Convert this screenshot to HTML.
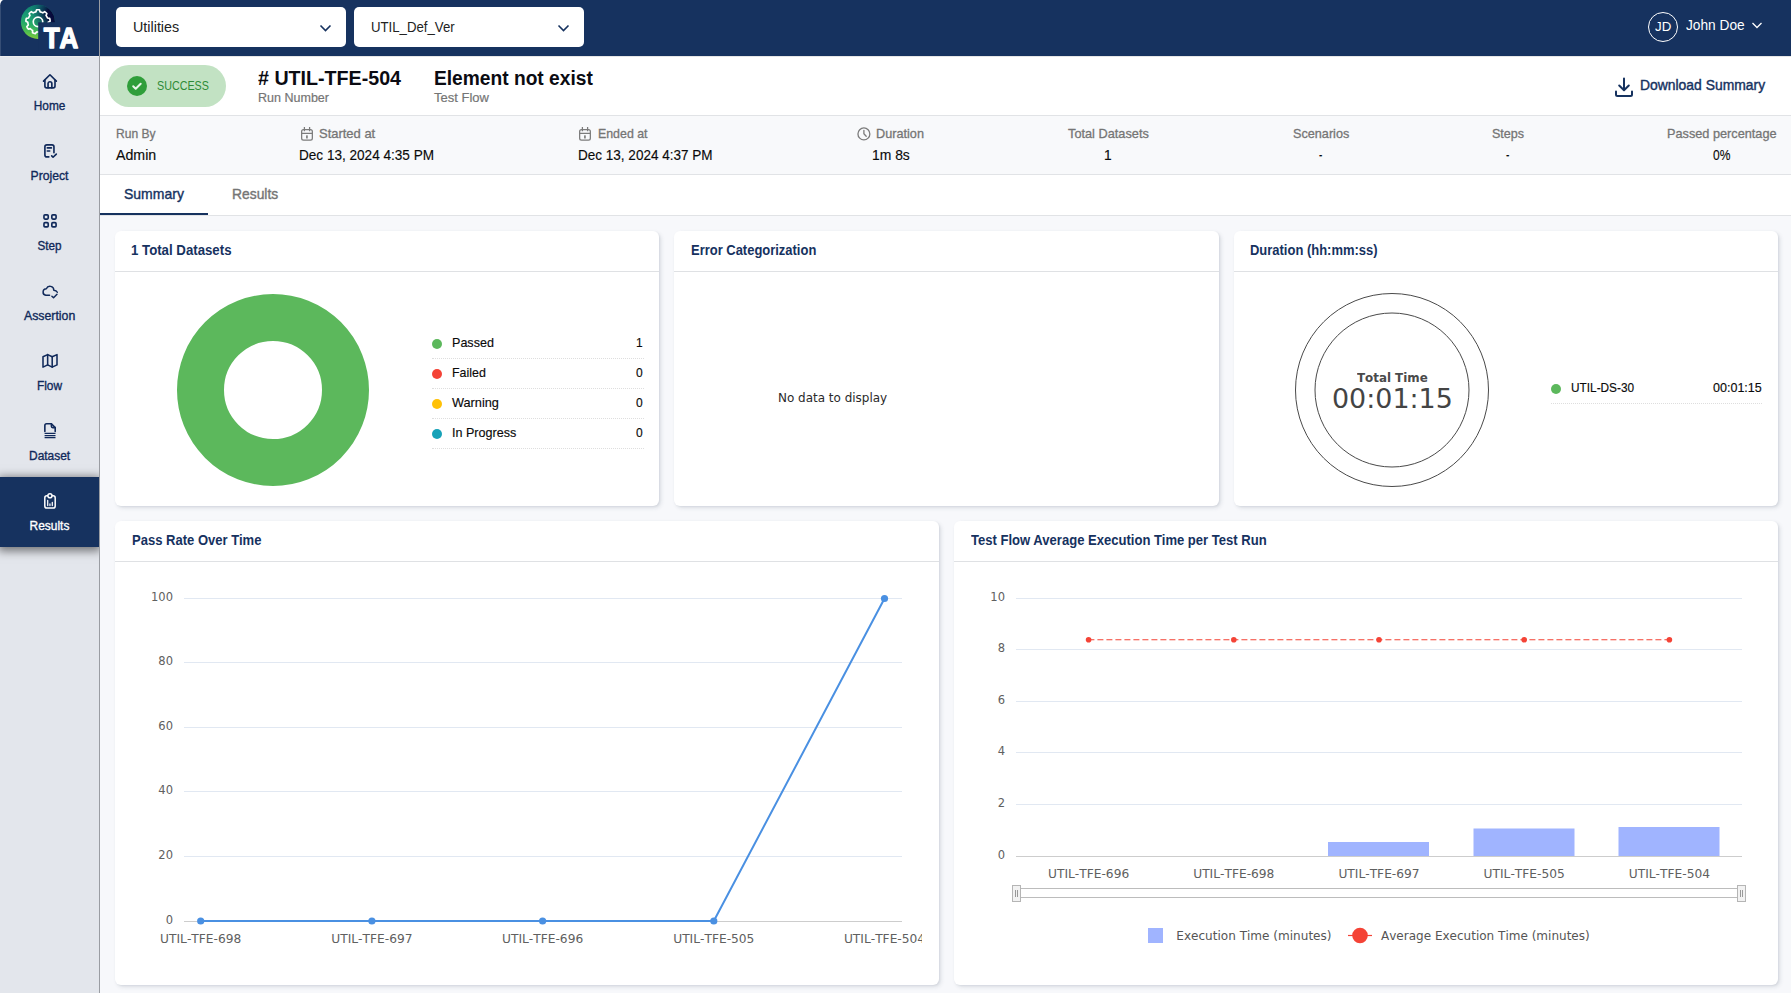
<!DOCTYPE html>
<html lang="en">
<head>
<meta charset="utf-8">
<title>Test Run Summary</title>
<style>
*{box-sizing:border-box;margin:0;padding:0}
html,body{width:1791px;height:993px;overflow:hidden}
body{font-family:"Liberation Sans",sans-serif;background:#f7f8fb;color:#000;position:relative}
.abs{position:absolute}
.t{position:absolute;white-space:nowrap;line-height:1;transform-origin:0 0}
/* top bar */
#topbar{left:0;top:0;width:1791px;height:56px;background:#16325f}
#corner{left:0;top:0;width:4px;height:7px;background:#fff;overflow:hidden}
#corner i{display:block;width:8px;height:14px;border-radius:3.500px 0 0 0 / 6.500px 0 0 0;background:#16325f}
#edge{left:0;top:6px;width:1px;height:50px;background:rgba(255,255,255,.14)}
#sidetop{left:0;top:56px;width:99px;height:1px;background:#ededee}
.sel{top:7px;height:40px;width:230px;background:#fff;border-radius:5px}
/* sidebar */
#side{left:0;top:56px;width:99px;height:937px;background:#e3e6ec;overflow:hidden}
#sideline{left:99px;top:0;width:1px;height:993px;background:#9a9da3}
.nav{left:0;width:99px;height:70px}
.nav .lbl{position:absolute;left:0;width:99px;text-align:center;top:43px;font-size:12.500px;color:#10295a;line-height:14px;-webkit-text-stroke:.35px currentColor;transform-origin:50% 0;white-space:nowrap}
.nav .lbl span{display:inline-block}
#navact{left:0;top:421px;width:99px;height:70px;background:#16325f;box-shadow:0 2px 9px 2px rgba(0,0,0,.5)}
/* run header */
#runhdr{left:100px;top:56px;width:1691px;height:59px;background:#fff;border-top:1px solid #e6e6e6}
#pill{left:108px;top:65px;width:118px;height:42px;border-radius:21px;background:#c2e2c3}
#info{left:100px;top:115px;width:1691px;height:60px;background:#f8f9fb;border-top:1px solid #e1e3e6;border-bottom:1px solid #e1e3e6}
#tabs{left:100px;top:175px;width:1691px;height:41px;background:#fff;border-bottom:1px solid #e1e3e6}
#tabline{left:100px;top:213px;width:108px;height:2px;background:#16325f}
.lab{font-size:13px;color:#757575;-webkit-text-stroke:.3px #757575}
.val{font-size:15px;color:#0a0a0a;-webkit-text-stroke:.150px #0a0a0a}
/* cards */
.card{background:#fff;border-radius:6px;box-shadow:2px 2px 4px rgba(55,70,90,.13),1px 1px 2px rgba(55,70,90,.08)}
.chead{position:absolute;left:0;top:0;right:0;height:41px;border-bottom:1px solid #dfe1e4}
.ctitle{font-size:14px;font-weight:bold;color:#16325f;left:16px;top:13px}
.dv{font-family:"DejaVu Sans",sans-serif;font-kerning:none}
.dot{width:10px;height:10px;border-radius:50%}
.lg{font-size:13px;color:#0a0a0a;-webkit-text-stroke:.150px #0a0a0a}
.lgrow{left:432px;width:211.500px;height:30px;border-bottom:1px dotted #dedede}
.m{-webkit-text-stroke:.3px currentColor}
/*FIT*/
#t_util{left:133.0px!important;transform:scaleX(0.9557)}
#t_udv{left:370.9px!important;transform:scaleX(0.8806)}
#t_jd{left:1654.5px!important;transform:scaleX(1.0258)}
#t_john{left:1686.3px!important;transform:scaleX(0.9141)}
#t_succ{left:157.1px!important;transform:scaleX(0.8257)}
#t_run{left:258.3px!important;transform:scaleX(0.9823)}
#t_runl{left:258.3px!important;transform:scaleX(0.9633)}
#t_ene{left:434.2px!important;transform:scaleX(0.9589)}
#t_tfl{left:434.2px!important;transform:scaleX(0.9999)}
#t_dl{left:1639.8px!important;transform:scaleX(0.9924)}
#t_runby{left:116.2px!important;transform:scaleX(0.9287)}
#t_admin{left:116.2px!important;transform:scaleX(0.9452)}
#t_sta{left:319.3px!important;transform:scaleX(0.9969)}
#t_std{left:299.2px!important;transform:scaleX(0.9044)}
#t_ena{left:597.9px!important;transform:scaleX(0.9511)}
#t_end{left:577.8px!important;transform:scaleX(0.9017)}
#t_dur{left:876.2px!important;transform:scaleX(0.9768)}
#t_durv{left:871.6px!important;transform:scaleX(0.9251)}
#t_tds{left:1068.2px!important;transform:scaleX(0.9809)}
#t_tdsv{left:1104.1px!important;transform:scaleX(0.9200)}
#t_scn{left:1292.5px!important;transform:scaleX(0.9738)}
#t_scnv{left:1319.0px!important;transform:scaleX(0.6600)}
#t_stp{left:1492.2px!important;transform:scaleX(0.9654)}
#t_stpv{left:1506.2px!important;transform:scaleX(0.6800)}
#t_pp{left:1667.4px!important;transform:scaleX(0.9783)}
#t_ppv{left:1713.3px!important;transform:scaleX(0.8023)}
#t_sum{left:124.0px!important;transform:scaleX(0.9332)}
#t_res{left:232.2px!important;transform:scaleX(0.9234)}
#t_c1{left:131.2px!important;transform:scaleX(0.9450)}
#t_c2{left:690.5px!important;transform:scaleX(0.9257)}
#t_c3{left:1250.0px!important;transform:scaleX(0.9261)}
#t_c4{left:131.6px!important;transform:scaleX(0.9306)}
#t_c5{left:970.6px!important;transform:scaleX(0.9323)}
#t_pas{left:452.1px!important;transform:scaleX(0.9660)}
#t_fai{left:452.1px!important;transform:scaleX(0.9542)}
#t_war{left:452.1px!important;transform:scaleX(0.9784)}
#t_inp{left:452.1px!important;transform:scaleX(0.9671)}
#t_v1{left:636.2px!important;transform:scaleX(0.9200)}
#t_v2{left:636.3px!important;transform:scaleX(0.9261)}
#t_v3{left:636.3px!important;transform:scaleX(0.9261)}
#t_v4{left:636.3px!important;transform:scaleX(0.9261)}
#t_nodata{left:778.3px!important;transform:scaleX(0.9578)}
#t_tt{left:1356.8px!important;transform:scaleX(0.9888)}
#t_tv{left:1331.6px!important;transform:scaleX(0.9962)}
#t_ds{left:1571.0px!important;transform:scaleX(0.9098)}
#t_dsv{left:1713.2px!important;transform:scaleX(0.9642)}
#t_home{transform:translateX(0.10px) scaleX(0.9477)}
#t_proj{transform:translateX(0.00px) scaleX(0.9767)}
#t_step{transform:translateX(0.00px) scaleX(0.9332)}
#t_assert{transform:translateX(0.15px) scaleX(0.9845)}
#t_flow{transform:translateX(-0.05px) scaleX(0.9505)}
#t_dataset{transform:translateX(0.10px) scaleX(0.9561)}
#t_results{transform:translateX(0.00px) scaleX(0.9547)}
/*ENDFIT*/
</style>
</head>
<body>
<!-- TOP BAR -->
<div id="topbar" class="abs"></div>
<div id="corner" class="abs"><i></i></div><div id="edge" class="abs"></div>
<!-- logo -->
<svg class="abs" style="left:18px;top:2px;width:66px;height:52px" viewBox="0 0 66 52">
  <defs>
    <linearGradient id="lg" x1="0.55" y1="0" x2="0.4" y2="1">
      <stop offset="0" stop-color="#107a70"/>
      <stop offset="0.35" stop-color="#1a9c74"/>
      <stop offset="0.6" stop-color="#27ab68"/>
      <stop offset="0.82" stop-color="#4dbd50"/>
      <stop offset="1" stop-color="#80ca3c"/>
    </linearGradient>
    <radialGradient id="rg" cx="1.0" cy="0.27" r="0.72">
      <stop offset="0" stop-color="#07073a" stop-opacity="1"/>
      <stop offset="0.32" stop-color="#07073a" stop-opacity=".95"/>
      <stop offset="0.62" stop-color="#0a2a55" stop-opacity=".6"/>
      <stop offset="1" stop-color="#0f6a6a" stop-opacity="0"/>
    </radialGradient>
  </defs>
  <circle cx="19.900" cy="19.850" r="17.050" fill="url(#lg)"/><circle cx="19.900" cy="19.850" r="17.050" fill="url(#rg)"/>
  <g fill="none" stroke="#fff" stroke-width="1.650" stroke-linejoin="round">
    <path d="M17.88 9.87L18.56 7.79A12.15 12.15 0 0 1 21.44 7.79L22.12 9.87A10.2 10.2 0 0 1 24.79 10.84L26.65 9.68A12.15 12.15 0 0 1 28.86 11.53L28.04 13.57A10.2 10.2 0 0 1 29.46 16.03L31.63 16.34A12.15 12.15 0 0 1 32.13 19.17L30.19 20.21A10.2 10.2 0 0 1 29.70 23.00L31.17 24.64A12.15 12.15 0 0 1 29.73 27.13L27.58 26.68A10.2 10.2 0 0 1 25.41 28.50L25.48 30.69A12.15 12.15 0 0 1 22.77 31.68L21.42 29.95A10.2 10.2 0 0 1 18.58 29.95L17.23 31.68A12.15 12.15 0 0 1 14.52 30.69L14.59 28.50A10.2 10.2 0 0 1 12.42 26.68L10.27 27.13A12.15 12.15 0 0 1 8.83 24.64L10.30 23.00A10.2 10.2 0 0 1 9.81 20.21L7.87 19.17A12.15 12.15 0 0 1 8.37 16.34L10.54 16.03A10.2 10.2 0 0 1 11.96 13.57L11.14 11.53A12.15 12.15 0 0 1 13.35 9.68L15.21 10.84A10.2 10.2 0 0 1 17.88 9.87Z"/>
    <circle cx="20" cy="19.850" r="4.750"/>
  </g>
  <rect x="20.200" y="20.300" width="46" height="32" fill="#16325f"/>
  <text transform="translate(25.700,45.700) scale(0.880,1)" style="font-kerning:none" font-family="'Liberation Sans',sans-serif" font-weight="bold" font-size="29.500" fill="#fff" stroke="#fff" stroke-width="1.500" stroke-linejoin="round">TA</text>
</svg>
<!-- selects -->
<div class="abs sel" style="left:116px"></div>
<div class="abs sel" style="left:354px"></div>
<div class="t" id="t_util" style="left:133px;top:19px;font-size:15px;color:#222">Utilities</div>
<div class="t" id="t_udv" style="left:371px;top:19px;font-size:15px;color:#222">UTIL_Def_Ver</div>
<svg class="abs" style="left:319.300px;top:22.800px;width:13px;height:10px" viewBox="0 0 13 10"><path d="M1.5 2.5l5 5 5-5" fill="none" stroke="#16325f" stroke-width="1.6"/></svg>
<svg class="abs" style="left:557.300px;top:22.800px;width:13px;height:10px" viewBox="0 0 13 10"><path d="M1.5 2.5l5 5 5-5" fill="none" stroke="#16325f" stroke-width="1.6"/></svg>
<!-- user -->
<div class="abs" style="left:1647.800px;top:11.600px;width:30.400px;height:30.400px;border:1.400px solid #fff;border-radius:50%"></div>
<div class="t" id="t_jd" style="left:1654px;top:20px;font-size:13px;color:#fff">JD</div>
<div class="t" id="t_john" style="left:1686px;top:17px;font-size:15px;color:#fff">John Doe</div>
<svg class="abs" style="left:1751px;top:21px;width:12px;height:9px" viewBox="0 0 12 9"><path d="M1.5 2l4.5 4.5L10.500 2" fill="none" stroke="#fff" stroke-width="1.3"/></svg>
<div id="sideline" class="abs"></div>
<!-- SIDEBAR -->
<div id="side" class="abs"><div id="navact" class="abs"></div></div><div id="sidetop" class="abs"></div>
<svg class="abs" style="left:38px;top:68px;width:24px;height:24px" viewBox="38 68 24 24" fill="none" stroke="#10295a" stroke-width="1.65" stroke-linejoin="round" stroke-linecap="round"><path d="M43.550 81.100L49.950 74.750l6.400 6.350"/><path d="M44.900 80.300v5.700a1.800 1.800 0 0 0 1.800 1.800h6.500a1.800 1.800 0 0 0 1.800-1.800v-5.700"/><path d="M48.050 87.800v-4.200a1.900 1.900 0 0 1 3.800 0v4.200"/></svg>
<div class="abs nav" style="top:56px"><div class="lbl" id="t_home">Home</div></div>
<svg class="abs" style="left:38px;top:138px;width:24px;height:24px" viewBox="38 138 24 24" fill="none" stroke="#10295a" stroke-width="1.65" stroke-linejoin="round" stroke-linecap="round"><path d="M53.950 152.700v-5.850a2 2 0 0 0-2-2h-5.050a2 2 0 0 0-2 2v8.050a2 2 0 0 0 2 2h1.900"/><path d="M47.300 147.930h4.100M47.300 150.950h2.400"/><path d="M51.700 155.900l1.350 1.350 3.250-3.100"/></svg>
<div class="abs nav" style="top:126px"><div class="lbl" id="t_proj">Project</div></div>
<svg class="abs" style="left:38px;top:208px;width:24px;height:24px" viewBox="38 208 24 24" fill="none" stroke="#10295a" stroke-width="1.65" stroke-linejoin="round" stroke-linecap="round"><rect x="43.970" y="214.830" width="4.240" height="4.240" rx="1"/><rect x="51.830" y="214.830" width="4.240" height="4.240" rx="1"/><rect x="43.970" y="222.680" width="4.240" height="4.240" rx="1"/><rect x="51.830" y="222.680" width="4.240" height="4.240" rx="1"/></svg>
<div class="abs nav" style="top:196px"><div class="lbl" id="t_step">Step</div></div>
<svg class="abs" style="left:38px;top:278px;width:24px;height:24px" viewBox="38 278 24 24" fill="none" stroke="#10295a" stroke-width="1.45" stroke-linejoin="round" stroke-linecap="round"><path d="M49.600 295.300H45.800a3.300 3.300 0 0 1 .57-6.550A3.850 3.850 0 0 1 53.800 290.200c1.700 0 3 .9 3.500 2.100"/><path d="M51.900 296.200l1.650 1.650 3.450-3.550"/></svg>
<div class="abs nav" style="top:266px"><div class="lbl" id="t_assert">Assertion</div></div>
<svg class="abs" style="left:38px;top:348px;width:24px;height:24px" viewBox="38 348 24 24" fill="none" stroke="#10295a" stroke-width="1.55" stroke-linejoin="round" stroke-linecap="round"><path d="M43 356.700L47.650 354.600 52.200 356.700 57 354.600V364.900L52.200 367.100 47.650 364.900 43 367.100Z"/><path d="M47.650 354.600V364.900M52.200 356.700V367.100"/></svg>
<div class="abs nav" style="top:336px"><div class="lbl" id="t_flow">Flow</div></div>
<svg class="abs" style="left:38px;top:418px;width:24px;height:24px" viewBox="38 418 24 24" fill="none" stroke="#10295a" stroke-width="1.6" stroke-linejoin="round" stroke-linecap="round"><path d="M44.850 431.400V425.500a1.700 1.700 0 0 1 1.700-1.700H51.400L55.200 427.600V431.400"/><path d="M51.400 423.900V426.300a1.300 1.300 0 0 0 1.300 1.300H55.200" /><path d="M44.600 433.400H55.500M44.600 435.550H55.500M44.600 437.650H55.500" stroke-width="1.300" stroke-linecap="butt"/></svg>
<div class="abs nav" style="top:406px"><div class="lbl" id="t_dataset">Dataset</div></div>
<svg class="abs" style="left:38px;top:488px;width:24px;height:24px" viewBox="38 488 24 24" fill="none" stroke="#fff" stroke-width="1.5" stroke-linejoin="round" stroke-linecap="round"><rect x="44.800" y="495.800" width="10.400" height="12.250" rx="2.100"/><circle cx="49.950" cy="495.700" r="2.050" fill="#16325f"/><path d="M47.700 505.500v-5.100M49.950 505.500v-1.600M52.300 505.500v-3.100" stroke-width="1.250"/></svg>
<div class="abs nav" style="top:476px"><div class="lbl" id="t_results" style="color:#fff">Results</div></div>
<!-- RUN HEADER -->
<div id="runhdr" class="abs"></div>
<div id="info" class="abs"></div>
<div id="tabs" class="abs"></div>
<div id="tabline" class="abs"></div>
<div id="pill" class="abs"></div>
<svg class="abs" style="left:127px;top:76px;width:20px;height:20px" viewBox="0 0 20 20"><circle cx="10" cy="10" r="10" fill="#2f9e3a"/><path d="M6.200 10.200l2.500 2.500 5-5" fill="none" stroke="#eaf6ea" stroke-width="2" stroke-linecap="round" stroke-linejoin="round"/></svg>
<div class="t" id="t_succ" style="left:157px;top:79px;font-size:13px;color:#2e8b36">SUCCESS</div>
<div class="t" id="t_run" style="left:258px;top:68px;font-size:20px;font-weight:bold;color:#0b0b12">#&nbsp;UTIL-TFE-504</div>
<div class="t" id="t_runl" style="left:258px;top:91px;font-size:13px;color:#757575;-webkit-text-stroke:.2px #757575">Run Number</div>
<div class="t" id="t_ene" style="left:434px;top:68px;font-size:20px;font-weight:bold;color:#0b0b12">Element not exist</div>
<div class="t" id="t_tfl" style="left:434px;top:91px;font-size:13px;color:#757575;-webkit-text-stroke:.2px #757575">Test Flow</div>
<svg class="abs" style="left:1614px;top:75.500px;width:20px;height:22px" viewBox="0 0 20 22"><g fill="none" stroke="#16325f" stroke-width="2" stroke-linecap="round" stroke-linejoin="round"><path d="M10 2.500v11.500M5.200 9.500l4.800 4.700 4.800-4.700"/><path d="M2 15.500v3a1.500 1.500 0 0 0 1.500 1.500h13a1.500 1.500 0 0 0 1.500-1.500v-3"/></g></svg>
<div class="t" id="t_dl" style="left:1639px;top:78px;font-size:14px;color:#16325f;-webkit-text-stroke:.4px #16325f">Download Summary</div>
<!-- info row -->
<div class="t lab" id="t_runby" style="left:116px;top:127px">Run By</div>
<div class="t val" id="t_admin" style="left:116px;top:147px">Admin</div>
<svg class="abs" style="left:299px;top:125px;width:16px;height:18px" viewBox="299 125 16 18"><g fill="none" stroke="#7b7b7b" stroke-width="1.250" stroke-linejoin="round"><rect x="301.650" y="129.500" width="10.700" height="10.700" rx="1.900"/><path d="M301.650 133.300H312.350M304.400 127.100V131.200M309.600 127.100V131.200"/><rect x="306.100" y="135.300" width="1.650" height="3.100" rx=".500" fill="#7b7b7b" stroke="none"/></g></svg>
<div class="t lab" id="t_sta" style="left:319px;top:127px">Started at</div>
<div class="t val" id="t_std" style="left:299px;top:147px">Dec 13, 2024 4:35 PM</div>
<svg class="abs" style="left:577px;top:125px;width:16px;height:18px" viewBox="299 125 16 18"><g fill="none" stroke="#7b7b7b" stroke-width="1.250" stroke-linejoin="round"><rect x="301.650" y="129.500" width="10.700" height="10.700" rx="1.900"/><path d="M301.650 133.300H312.350M304.400 127.100V131.200M309.600 127.100V131.200"/><rect x="306.100" y="135.300" width="1.650" height="3.100" rx=".500" fill="#7b7b7b" stroke="none"/></g></svg>
<div class="t lab" id="t_ena" style="left:597px;top:127px">Ended at</div>
<div class="t val" id="t_end" style="left:577px;top:147px">Dec 13, 2024 4:37 PM</div>
<svg class="abs" style="left:856px;top:126px;width:16px;height:16px" viewBox="856 126 16 16"><g fill="none" stroke="#7b7b7b" stroke-width="1.300" stroke-linecap="round" stroke-linejoin="round"><circle cx="863.900" cy="133.900" r="5.950"/><path d="M863.900 130.300V133.800L866.200 136.200"/></g></svg>
<div class="t lab" id="t_dur" style="left:876px;top:127px">Duration</div>
<div class="t val" id="t_durv" style="left:871px;top:147px">1m 8s</div>
<div class="t lab" id="t_tds" style="left:1067px;top:127px">Total Datasets</div>
<div class="t val" id="t_tdsv" style="left:1104px;top:147px">1</div>
<div class="t lab" id="t_scn" style="left:1292px;top:127px">Scenarios</div>
<div class="t val" id="t_scnv" style="left:1318px;top:147px">-</div>
<div class="t lab" id="t_stp" style="left:1491px;top:127px">Steps</div>
<div class="t val" id="t_stpv" style="left:1505px;top:147px">-</div>
<div class="t lab" id="t_pp" style="left:1667px;top:127px">Passed percentage</div>
<div class="t val" id="t_ppv" style="left:1712px;top:147px">0%</div>
<!-- tabs -->
<div class="t" id="t_sum" style="left:124px;top:186px;font-size:15px;color:#16325f;-webkit-text-stroke:.4px #16325f">Summary</div>
<div class="t" id="t_res" style="left:232px;top:186px;font-size:15px;color:#757575;-webkit-text-stroke:.4px #757575">Results</div>
<!-- CARDS -->
<div class="abs card" id="c1" style="left:115px;top:231px;width:544px;height:275px"><div class="chead"></div></div>
<div class="t ctitle" id="t_c1" style="left:131px;top:243px">1 Total Datasets</div>
<svg class="abs" style="left:173px;top:289.700px;width:200px;height:200px" viewBox="0 0 200 200"><circle cx="100" cy="100" r="72.500" fill="none" stroke="#5cb85c" stroke-width="47"/></svg>
<div class="abs lgrow" style="top:329px"></div><div class="abs lgrow" style="top:359px"></div><div class="abs lgrow" style="top:389px"></div><div class="abs lgrow" style="top:419px"></div>
<div class="abs dot" style="left:432px;top:338.6px;background:#5cb85c"></div>
<div class="abs dot" style="left:432px;top:368.6px;background:#f44336"></div>
<div class="abs dot" style="left:432px;top:398.6px;background:#ffc107"></div>
<div class="abs dot" style="left:432px;top:428.6px;background:#17a2b8"></div>
<div class="t lg" id="t_pas" style="left:452px;top:336px">Passed</div>
<div class="t lg" id="t_fai" style="left:452px;top:366px">Failed</div>
<div class="t lg" id="t_war" style="left:452px;top:396px">Warning</div>
<div class="t lg" id="t_inp" style="left:452px;top:426px">In Progress</div>
<div class="t lg" id="t_v1" style="left:636px;top:336px">1</div>
<div class="t lg" id="t_v2" style="left:636px;top:366px">0</div>
<div class="t lg" id="t_v3" style="left:636px;top:396px">0</div>
<div class="t lg" id="t_v4" style="left:636px;top:426px">0</div>
<div class="abs card" id="c2" style="left:674px;top:231px;width:545px;height:275px"><div class="chead"></div></div>
<div class="t ctitle" id="t_c2" style="left:690px;top:243px">Error Categorization</div>
<div class="t dv" id="t_nodata" style="left:778px;top:392px;font-size:12.500px;color:#2a2a2a">No data to display</div>
<div class="abs card" id="c3" style="left:1234px;top:231px;width:544px;height:275px"><div class="chead"></div></div>
<div class="t ctitle" id="t_c3" style="left:1250px;top:243px">Duration (hh:mm:ss)</div>
<svg class="abs" style="left:1292px;top:290px;width:200px;height:200px" viewBox="0 0 200 200"><circle cx="100" cy="100" r="96.500" fill="none" stroke="#4a4a4a" stroke-width="1"/><circle cx="100" cy="100" r="77" fill="none" stroke="#4a4a4a" stroke-width="1"/></svg>
<div class="t dv" id="t_tt" style="left:1356px;top:372px;font-size:12px;font-weight:bold;color:#4a4a4a">Total Time</div>
<div class="t dv" id="t_tv" style="left:1331px;top:385px;font-size:27px;color:#444">00:01:15</div>
<div class="abs dot" style="left:1551px;top:384px;background:#5cb85c"></div>
<div class="t lg" id="t_ds" style="left:1571px;top:381px">UTIL-DS-30</div>
<div class="t lg" id="t_dsv" style="left:1713px;top:381px">00:01:15</div>
<div class="abs" style="left:1551px;top:403px;width:211px;border-top:1px dotted #dedede"></div>
<div class="abs card" id="c4" style="left:115px;top:521px;width:824px;height:464px"><div class="chead"></div></div>
<div class="t ctitle" id="t_c4" style="left:131px;top:533px">Pass Rate Over Time</div>
<svg class="abs" id="lc" style="left:115px;top:562px;width:807px;height:400px" viewBox="115 562 807 400">
<g fill="none" stroke="#e1e8f2" stroke-width="1"><path d="M184 598.5H902"/><path d="M184 662.5H902"/><path d="M184 727.5H902"/><path d="M184 791.5H902"/><path d="M184 856.5H902"/></g>
<path d="M184 921.500H902" stroke="#cdcdcd" stroke-width="1.200" fill="none"/>
<g class="dv" font-size="11.500" fill="#606060"><text x="173" y="601.4" text-anchor="end">100</text><text x="173" y="665.4" text-anchor="end">80</text><text x="173" y="730.4" text-anchor="end">60</text><text x="173" y="794.4" text-anchor="end">40</text><text x="173" y="859.4" text-anchor="end">20</text><text x="173" y="924.4" text-anchor="end">0</text><text x="200.7" y="942.5" text-anchor="middle" font-size="12" textLength="81.200" lengthAdjust="spacingAndGlyphs">UTIL-TFE-698</text><text x="371.9" y="942.5" text-anchor="middle" font-size="12" textLength="81.200" lengthAdjust="spacingAndGlyphs">UTIL-TFE-697</text><text x="542.6" y="942.5" text-anchor="middle" font-size="12" textLength="81.200" lengthAdjust="spacingAndGlyphs">UTIL-TFE-696</text><text x="713.8" y="942.5" text-anchor="middle" font-size="12" textLength="81.200" lengthAdjust="spacingAndGlyphs">UTIL-TFE-505</text><text x="884.5" y="942.5" text-anchor="middle" font-size="12" textLength="81.200" lengthAdjust="spacingAndGlyphs">UTIL-TFE-504</text></g>
<path d="M200.7 921 L371.9 921 L542.6 921 L713.8 921 L884.5 598.5" fill="none" stroke="#4a90e2" stroke-width="2" stroke-linejoin="round" stroke-linecap="round"/>
<g fill="#4a90e2"><circle cx="200.7" cy="921" r="3.600"/><circle cx="371.9" cy="921" r="3.600"/><circle cx="542.6" cy="921" r="3.600"/><circle cx="713.8" cy="921" r="3.600"/><circle cx="884.5" cy="598.5" r="3.600"/></g>
</svg>
<div class="abs card" id="c5" style="left:954px;top:521px;width:824px;height:464px"><div class="chead"></div></div>
<div class="t ctitle" id="t_c5" style="left:970px;top:533px">Test Flow Average Execution Time per Test Run</div>
<svg class="abs" id="bc" style="left:954px;top:562px;width:824px;height:400px" viewBox="954 562 824 400">
<g fill="none" stroke="#e1e8f2" stroke-width="1"><path d="M1016 598.5H1742"/><path d="M1016 649.5H1742"/><path d="M1016 701.5H1742"/><path d="M1016 752.5H1742"/><path d="M1016 804.5H1742"/></g>
<g fill="#a0b4ff"><rect x="1328" y="842" width="101" height="14"/><rect x="1473.500" y="828.500" width="101" height="27.500"/><rect x="1618.500" y="827" width="101" height="29"/></g>
<path d="M1016 856.500H1742" stroke="#cdcdcd" stroke-width="1.200" fill="none"/>
<g class="dv" font-size="11.500" fill="#606060"><text x="1005" y="601.4" text-anchor="end">10</text><text x="1005" y="652.4" text-anchor="end">8</text><text x="1005" y="704.4" text-anchor="end">6</text><text x="1005" y="755.4" text-anchor="end">4</text><text x="1005" y="807.4" text-anchor="end">2</text><text x="1005" y="859.4" text-anchor="end">0</text></g>
<g class="dv" font-size="12" fill="#606060"><text x="1088.6" y="877.500" text-anchor="middle" font-size="12" textLength="81.200" lengthAdjust="spacingAndGlyphs">UTIL-TFE-696</text><text x="1233.8" y="877.500" text-anchor="middle" font-size="12" textLength="81.200" lengthAdjust="spacingAndGlyphs">UTIL-TFE-698</text><text x="1379.0" y="877.500" text-anchor="middle" font-size="12" textLength="81.200" lengthAdjust="spacingAndGlyphs">UTIL-TFE-697</text><text x="1524.2" y="877.500" text-anchor="middle" font-size="12" textLength="81.200" lengthAdjust="spacingAndGlyphs">UTIL-TFE-505</text><text x="1669.4" y="877.500" text-anchor="middle" font-size="12" textLength="81.200" lengthAdjust="spacingAndGlyphs">UTIL-TFE-504</text></g>
<path d="M1088.400 639.800H1669.400" fill="none" stroke="#f44336" stroke-width="1.100" stroke-dasharray="6 3"/>
<g fill="#f44336"><circle cx="1088.6" cy="639.700" r="2.800"/><circle cx="1233.8" cy="639.700" r="2.800"/><circle cx="1379.0" cy="639.700" r="2.800"/><circle cx="1524.2" cy="639.700" r="2.800"/><circle cx="1669.4" cy="639.700" r="2.800"/></g>
<!-- scrollbar -->
<rect x="1016.500" y="888.500" width="725" height="9" fill="#fff" stroke="#bcbcbc" stroke-width="1"/>
<rect x="1012.500" y="885.500" width="8" height="16" fill="#f2f2f2" stroke="#b5b5b5" stroke-width="1"/>
<path d="M1015.500 890v7M1017.500 890v7" stroke="#999" stroke-width="1"/>
<rect x="1737.500" y="885.500" width="8" height="16" fill="#f2f2f2" stroke="#b5b5b5" stroke-width="1"/>
<path d="M1740.500 890v7M1742.500 890v7" stroke="#999" stroke-width="1"/>
<!-- legend -->
<rect x="1148" y="928" width="15" height="15" fill="#a0b4ff"/>
<path d="M1348 935.500H1372" stroke="#f44336" stroke-width="1.200"/>
<circle cx="1360" cy="935.500" r="7.800" fill="#f44336"/>
<g class="dv" font-size="12.500" fill="#555"><text id="t_lg1" x="1176.300" y="940" textLength="155.200" lengthAdjust="spacingAndGlyphs">Execution Time (minutes)</text><text id="t_lg2" x="1381" y="940" textLength="208.700" lengthAdjust="spacingAndGlyphs">Average Execution Time (minutes)</text></g>
</svg>
</body>
</html>
